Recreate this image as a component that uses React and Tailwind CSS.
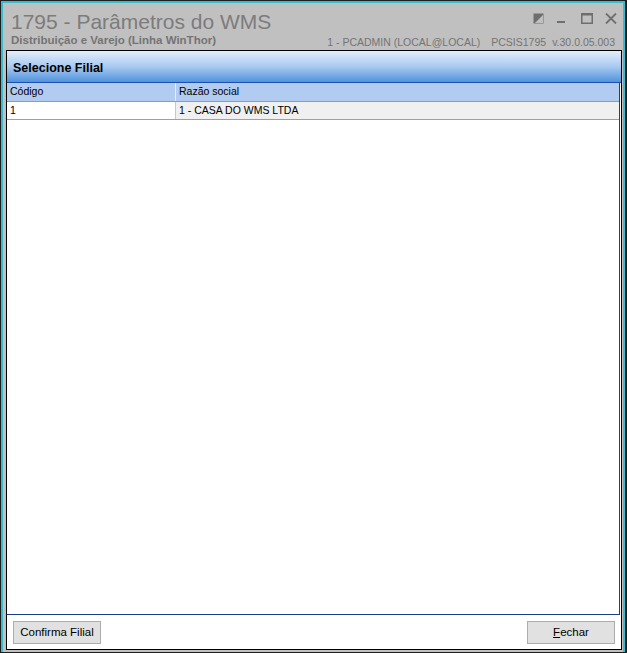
const font = { fontFamily: '"Liberation Sans", Arial, sans-serif' };

const WindowIcons = () => (
  <div className="flex items-start gap-[12px] pt-[10px] text-[#6e6e6e]">
    <svg width="11" height="11" viewBox="0 0 11 11">
      <rect x="0.5" y="0.5" width="10" height="10" fill="#6e6e6e" />
      <polygon points="10,2 10,10 2,10" fill="#c0c0c0" />
    </svg>
    <svg width="8" height="11" viewBox="0 0 8 11" className="ml-[1px]">
      <rect x="0" y="8" width="8" height="2" fill="#6e6e6e" />
    </svg>
    <svg width="12" height="11" viewBox="0 0 12 11" className="ml-[4px]">
      <rect x="0.75" y="0.75" width="10.5" height="9.5" fill="none" stroke="#6e6e6e" strokeWidth="1.5" />
      <rect x="0" y="0" width="12" height="2.5" fill="#6e6e6e" />
    </svg>
    <svg width="12" height="11" viewBox="0 0 12 11">
      <path d="M1 0.5 L11 10.5 M11 0.5 L1 10.5" stroke="#6e6e6e" strokeWidth="1.8" />
    </svg>
  </div>
);

const Button = ({ children }) => (
  <button className="h-[23px] w-[88px] bg-[#e1e1e1] border border-[#adadad] text-[11.5px] text-black">
    {children}
  </button>
);

export default function App() {
  return (
    <div className="w-[627px] h-[653px] bg-[#1e1e1e] pt-[1px] pl-[1px] pr-[2px] pb-[1px]" style={font}>
      <div className="h-full border-t-2 border-l-2 border-r-2 border-[#38bcd0] bg-[#c0c0c0] pl-[3px] pr-[1px] pb-[2px] flex flex-col">
        {/* title bar */}
        <div className="h-[47px] flex justify-between pl-[5px] pr-[5px]">
          <div className="flex flex-col">
            <div className="text-[21px] leading-none text-[#7c7c7c] pt-[8px]">1795 - Parâmetros do WMS</div>
            <div className="text-[11.5px] leading-none font-bold text-[#747474] mt-[3px]">
              Distribuição e Varejo (Linha WinThor)
            </div>
          </div>
          <div className="flex flex-col items-end">
            <WindowIcons />
            <div className="flex gap-[11px] text-[10.5px] leading-none text-[#747474] mt-[13px] pr-[2px]">
              <span>1 - PCADMIN (LOCAL@LOCAL)</span>
              <span className="flex gap-[6px]">
                <span>PCSIS1795</span>
                <span>v.30.0.05.003</span>
              </span>
            </div>
          </div>
        </div>

        {/* panel */}
        <div className="flex-1 border border-black bg-white flex flex-col">
          <div className="h-[32px] bg-gradient-to-b from-[#e2eefb] via-[#a9caf0] to-[#4f93dc] border-b border-[#1b4fb3] flex items-center pl-[6px] pt-[4px]">
            <span className="text-[12.5px] font-bold text-black">Selecione Filial</span>
          </div>
          <div className="flex-1 flex flex-col border-r border-b border-[#1b3f8a] mr-[1px]">
            <div className="h-[19px] flex bg-[#b2cbf0] border-b border-[#7f9dd2] text-[10.5px] text-black">
              <div className="w-[169px] border-r border-[#e6eefa] pl-[3px] flex items-center">Código</div>
              <div className="flex-1 pl-[3px] flex items-center">Razão social</div>
            </div>
            <div className="h-[18px] flex border-b border-[#a0a0a0] text-[10.5px] text-black">
              <div className="w-[169px] bg-white border-r border-[#c8c8c8] pl-[3px] flex items-center">1</div>
              <div className="flex-1 bg-[#f0f0f0] pl-[3px] flex items-center">1 - CASA DO WMS LTDA</div>
            </div>
            <div className="flex-1 bg-white" />
          </div>
          <div className="h-[34px] flex justify-between items-start pt-[6px] pl-[6px] pr-[6px]">
            <Button>Confirma Filial</Button>
            <Button>
              <span className="underline">F</span>echar
            </Button>
          </div>
        </div>
      </div>
    </div>
  );
}
